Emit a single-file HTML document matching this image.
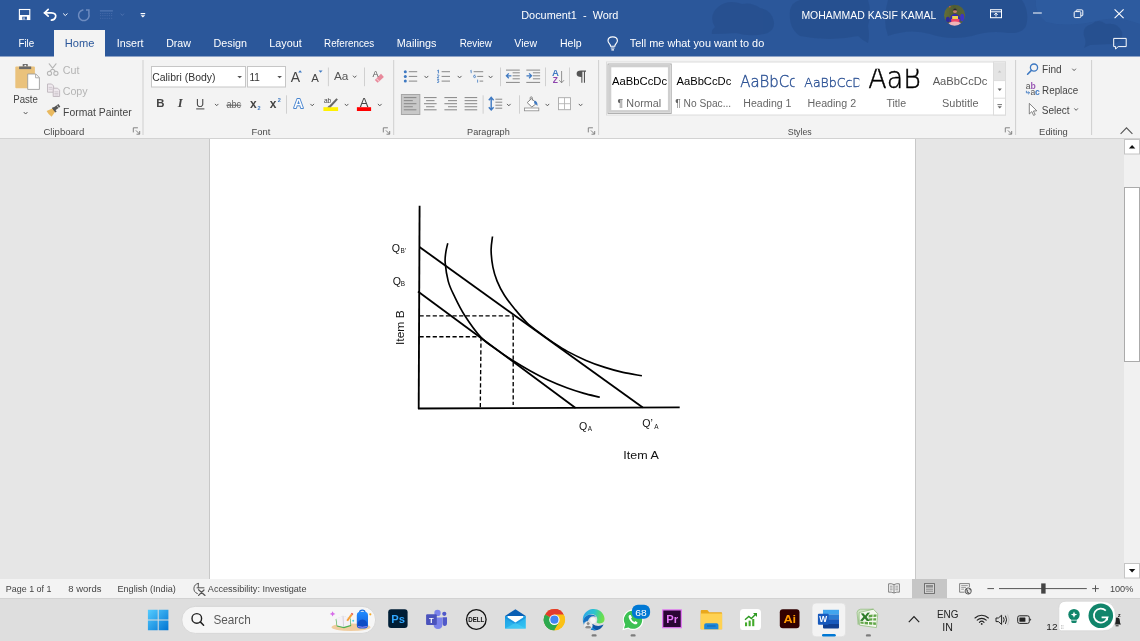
<!DOCTYPE html>
<html><head><meta charset="utf-8"><title>Document1 - Word</title>
<style>
*{box-sizing:border-box;margin:0;padding:0}
html,body{width:1140px;height:641px;overflow:hidden;background:#e6e6e6;font-family:"Liberation Sans",sans-serif}
#app{position:relative;width:1140px;height:641px;overflow:hidden}
.a{position:absolute}
.x{position:absolute;white-space:nowrap;line-height:1;transform-origin:0 0;display:block}
#title{left:0;top:0;width:1140px;height:56px;background:#2b579a}
#hometab{left:54px;top:30px;width:51px;height:27px;background:#f3f3f3}
#ribbon{left:0;top:56px;width:1140px;height:83px;background:#f3f3f3;border-bottom:1px solid #d2d2d2;border-top:1px solid #8ea3c7}
#doc{left:0;top:139px;width:1140px;height:440px;background:#e6e6e6}
#sheet{left:209px;top:139px;width:707px;height:440px;background:#fff;border-left:1px solid #c8c8c8;border-right:1px solid #c8c8c8}
#vs{left:1124px;top:139px;width:16px;height:440px;background:#f1f1f1}
#status{left:0;top:579px;width:1140px;height:19px;background:#f3f3f3}
#task{left:0;top:598px;width:1140px;height:43px;background:#dedede;border-top:1px solid #d2d2d2}
#svg{left:0;top:0;will-change:transform;font-family:"Liberation Sans",sans-serif}
</style></head><body><div id="app">
<div class="a" id="title"></div>
<div class="a" id="ribbon"></div>
<div class="a" id="hometab"></div>
<div class="a" id="doc"></div>
<div class="a" id="sheet"></div>
<div class="a" id="vs"></div>
<div class="a" id="status"></div>
<div class="a" id="task"></div>
<svg id="svg" class="a" width="1140" height="641" viewBox="0 0 1140 641">
<!-- title bar background clouds -->
<g fill="#21467f" opacity="0.36">
<path d="M712 34 Q711 30 715 27 Q708 16 718 7 Q728 -1 742 4 Q752 2 760 8 Q772 10 774 22 Q775 32 764 34 Q750 37 736 33 Q724 34 712 34Z"/>
<path d="M790 10 Q792 2 800 0 L868 0 Q872 12 868 26 Q870 36 868 43 Q862 40 858 36 Q830 42 800 36 Q788 28 790 10Z"/>
<path d="M888 0 L1022 0 Q1030 12 1026 26 Q1022 34 1008 33 Q990 30 972 36 Q950 41 930 34 Q910 28 888 36 Q882 20 888 0Z"/>
<path d="M1084 36 Q1082 26 1092 24 Q1098 18 1106 24 Q1118 22 1122 32 Q1124 42 1112 44 L1090 45 L1084 48 Q1087 42 1084 36Z"/>
</g>
<g fill="#3466b0" opacity="0.25">
<path d="M1036 0 L1140 0 L1140 24 Q1120 16 1100 20 Q1070 28 1046 22 Q1034 12 1036 0Z"/>
</g>
<!-- save -->
<g fill="none" stroke="#fff" stroke-width="1.1">
<rect x="19.4" y="9.5" width="10.4" height="10"/>
</g>
<rect x="19.4" y="15" width="10.4" height="4.6" fill="#fff"/>
<rect x="22.3" y="16.7" width="4.6" height="3" fill="#2b579a"/>
<rect x="23.5" y="17.3" width="1" height="2.3" fill="#fff"/>
<!-- undo -->
<path d="M44.4 12.8 H51.3 C55 12.8 56.2 15 55.6 17 C55 19 53.2 20 51.4 20.2" fill="none" stroke="#fff" stroke-width="1.7" stroke-linecap="round"/>
<path d="M48.2 9.4 L44.6 12.8 L48.2 16.2" fill="none" stroke="#fff" stroke-width="1.7" stroke-linecap="round" stroke-linejoin="round"/>
<path d="M63.2 13.5 L65.3 15.6 L67.4 13.5" fill="none" stroke="#fff" stroke-width="1"/>
<!-- redo faded -->
<g stroke="#6e8cc0" fill="none" stroke-width="1.5" stroke-linecap="round">
<path d="M82.8 10.1 A5.3 5.3 0 1 0 88.9 13.8"/>
<path d="M86 9.9 H88.9 V13.4" stroke-linejoin="miter" stroke-linecap="butt"/>
</g>
<!-- table faded -->
<g fill="#4a71ae">
<rect x="99.9" y="10.1" width="13" height="1.5"/>
</g>
<g stroke="#456aa9" stroke-width="0.9" stroke-dasharray="1.2 1">
<path d="M100 13.5 H113 M100 15.6 H113 M100 18.3 H113"/>
</g>
<path d="M120.6 13.6 L122.3 15.5 L124 13.6" fill="none" stroke="#4f74b0" stroke-width="0.9"/>
<!-- customize -->
<rect x="140.6" y="13" width="4.6" height="1.2" fill="#fff"/>
<path d="M140.6 15.2 H145.2 L142.9 17.4Z" fill="#fff"/>
<!-- avatar -->
<defs><clipPath id="av"><circle cx="954.6" cy="15.2" r="10.5"/></clipPath>
<filter id="avb" x="-10%" y="-10%" width="120%" height="120%"><feGaussianBlur stdDeviation="0.55"/></filter>
<linearGradient id="avg" x1="0" y1="0" x2="1" y2="0"><stop offset="0" stop-color="#6a7437"/><stop offset="0.45" stop-color="#4f5c33"/><stop offset="1" stop-color="#5d6a3a"/></linearGradient></defs>
<g clip-path="url(#av)"><g filter="url(#avb)">
<rect x="942" y="2" width="26" height="27" fill="url(#avg)"/>
<circle cx="949.7" cy="6.6" r="0.9" fill="#d2603a"/>
<ellipse cx="947.8" cy="19.6" rx="2" ry="2.8" fill="#2e2a9c"/>
<ellipse cx="962.2" cy="17.6" rx="2" ry="3.8" fill="#3d35c4"/>
<path d="M949.6 22 Q949.4 14.4 955 13.8 Q960.6 14.4 960.4 22Z" fill="#3429ae"/>
<circle cx="955" cy="11.2" r="1.9" fill="#c08468"/>
<path d="M953 10.6 Q953.2 8.6 955 8.6 Q956.8 8.6 957 10.6 Q955 9.8 953 10.6Z" fill="#2a2030"/>
<rect x="952.2" y="16" width="5.8" height="3.2" fill="#f0d24e"/>
<rect x="951.2" y="19" width="8.2" height="3.2" fill="#ee4468"/>
<ellipse cx="954.8" cy="24" rx="6.4" ry="2.6" fill="#efb4b8"/>
</g></g>
<!-- ribbon display options -->
<g fill="none" stroke="#fff" stroke-width="1">
<rect x="990.5" y="9.7" width="11" height="8"/>
<path d="M990.5 11.8 H1001.5"/>
<path d="M996 16.6 V13.2 M994.3 14.8 L996 13.1 L997.7 14.8"/>
</g>
<!-- minimize -->
<path d="M1033 13 H1041.8" stroke="#fff" stroke-width="1"/>
<!-- restore -->
<g fill="none" stroke="#fff" stroke-width="1">
<rect x="1074.2" y="11.6" width="6.6" height="6" rx="1"/>
<path d="M1076.2 11.4 V10.6 Q1076.2 9.9 1077 9.9 H1081.8 Q1082.8 9.9 1082.8 10.8 V15 Q1082.8 15.8 1082 15.8 H1081"/>
</g>
<!-- close -->
<path d="M1114.6 9.4 L1123.6 18.2 M1123.6 9.4 L1114.6 18.2" stroke="#fff" stroke-width="1.1"/>
<!-- comments -->
<path d="M1113.7 38.4 H1126.2 V46.6 H1118.2 L1115.6 49 V46.6 H1113.7Z" fill="none" stroke="#fff" stroke-width="1"/>
<!-- lightbulb -->
<g fill="none" stroke="#fff" stroke-width="1.15">
<path d="M610.6 46.2 C610.6 44 608 43.4 608 40.8 C608 38.4 610 36.8 612.7 36.8 C615.4 36.8 617.4 38.4 617.4 40.8 C617.4 43.4 614.8 44 614.8 46.2 Z"/>
<path d="M610.8 48 H614.6 M611.4 49.8 H614"/>
</g>
<rect x="142.5" y="60" width="1" height="75" fill="#cfcfcf"/>
<rect x="393.2" y="60" width="1" height="75" fill="#cfcfcf"/>
<rect x="598.1" y="60" width="1" height="75" fill="#cfcfcf"/>
<rect x="1015.1" y="60" width="1" height="75" fill="#cfcfcf"/>
<rect x="1091.1" y="60" width="1" height="75" fill="#cfcfcf"/>
<g fill="none" stroke="#777" stroke-width="0.9"><path d="M133.3 132.4 V127.8 H137.9"/><path d="M135.9 130.4 L139.5 134.0 M139.70000000000002 131.0 V134.2 H136.5"/></g>
<g fill="none" stroke="#777" stroke-width="0.9"><path d="M383.3 132.4 V127.8 H387.90000000000003"/><path d="M385.90000000000003 130.4 L389.5 134.0 M389.7 131.0 V134.2 H386.5"/></g>
<g fill="none" stroke="#777" stroke-width="0.9"><path d="M588.3 132.4 V127.8 H592.9"/><path d="M590.9 130.4 L594.5 134.0 M594.6999999999999 131.0 V134.2 H591.5"/></g>
<g fill="none" stroke="#777" stroke-width="0.9"><path d="M1005.3 132.4 V127.8 H1009.9"/><path d="M1007.9 130.4 L1011.5 134.0 M1011.6999999999999 131.0 V134.2 H1008.5"/></g>
<rect x="15.3" y="66.5" width="19.6" height="21.7" rx="1" fill="#eac27c"/>
<rect x="19.1" y="66.5" width="12.1" height="2.6" fill="#6a6a6a"/>
<path d="M22.7 66.6 V64.6 Q22.7 64 23.3 64 H27.2 Q27.8 64 27.8 64.6 V66.6Z" fill="#6a6a6a"/>
<rect x="24.4" y="64.9" width="1.8" height="1.3" fill="#f3f3f3"/>
<path d="M27.7 74 H35.8 L39.4 77.6 V89.4 H27.7Z" fill="#fff" stroke="#999" stroke-width="0.85" stroke-linejoin="round"/>
<path d="M35.6 74.2 V77.8 H39.2" fill="none" stroke="#999" stroke-width="0.8"/>
<path d="M23.80 112.10 L25.60 114.04 L27.40 112.10" fill="none" stroke="#555" stroke-width="1.0"/>
<g fill="none" stroke="#b6b6b6" stroke-width="1.1" stroke-linecap="round"><path d="M49.2 63.8 L55.4 71.6 M56 63.8 L49.8 71.6"/><circle cx="49.5" cy="73.3" r="2.1"/><circle cx="55.9" cy="73.3" r="2.1"/></g>
<g fill="#efe9ee" stroke="#bdb5bc" stroke-width="0.9" stroke-linejoin="round"><path d="M47.5 84 H51.6 L53.6 86 V92.2 H47.5Z"/><path d="M53.2 88.2 H57.6 L59.6 90.2 V96.5 H53.2Z"/></g>
<g stroke="#c4bcc3" stroke-width="0.7"><path d="M48.6 87.4 H52.4 M48.6 89.2 H52.4 M54.4 91.8 H58.4 M54.4 93.4 H58.4 M54.4 95 H58.4"/></g>
<path d="M46.6 110.9 L52.9 108.2 L55.3 111.4 L51.6 116.7 Q48.6 114.6 46.6 110.9Z" fill="#e9b95f"/>
<path d="M53.4 109.6 L59.4 105.4" stroke="#555" stroke-width="3.2" stroke-linecap="butt"/>
<path d="M52.6 107.4 L56 112" stroke="#555" stroke-width="1.6"/>
<path d="M57 105.5 L58.6 107.8" stroke="#d8d8d8" stroke-width="0.9"/>
<rect x="151.5" y="66.5" width="94" height="20.5" fill="#fff" stroke="#c6c6c6" stroke-width="1"/>
<rect x="247.5" y="66.5" width="38" height="20.5" fill="#fff" stroke="#c6c6c6" stroke-width="1"/>
<path d="M237.3 75.9 H242.0 L239.7 78.2Z" fill="#555"/>
<path d="M277.3 75.9 H282.0 L279.6 78.2Z" fill="#555"/>
<path d="M298.2 72.6 L300.1 70.3 L302 72.6Z" fill="#3e79c2"/>
<path d="M318.6 70.4 H322.6 L320.6 72.7Z" fill="#3e79c2"/>
<rect x="327.9" y="67.5" width="1" height="18.700000000000003" fill="#d0d0d0"/>
<rect x="364.0" y="67.5" width="1" height="18.700000000000003" fill="#d0d0d0"/>
<path d="M353.00 75.70 L354.70 77.54 L356.40 75.70" fill="none" stroke="#5e5e5e" stroke-width="1.0"/>
<path d="M374.8 79.9 L381 73.8 L383.9 77 L377.7 82.8Z" fill="#e8899b"/>
<path d="M375.9 78.8 L376.7 78 L379.6 81 L378.8 81.8Z" fill="#f6c4cd"/>
<rect x="226.4" y="104.7" width="14.8" height="1" fill="#555"/>
<rect x="196.2" y="108.4" width="8.2" height="1" fill="#444"/>
<path d="M215.00 103.90 L216.70 105.74 L218.40 103.90" fill="none" stroke="#5e5e5e" stroke-width="1.0"/>
<rect x="286.0" y="95.3" width="1" height="18.400000000000006" fill="#d0d0d0"/>
<path d="M310.40 103.90 L312.20 105.84 L314.00 103.90" fill="none" stroke="#5e5e5e" stroke-width="1.0"/>
<rect x="323.4" y="107.2" width="14.7" height="3.8" fill="#fff100"/>
<path d="M329 106 L336.4 98.2 L337.9 99.6 L330.8 107.2Z" fill="#666"/>
<path d="M327.4 107.3 L329 105.6 L330.9 107.3Z" fill="#666"/>
<path d="M344.80 103.90 L346.60 105.84 L348.40 103.90" fill="none" stroke="#5e5e5e" stroke-width="1.0"/>
<rect x="356.9" y="107.2" width="14.2" height="3.8" fill="#f00"/>
<path d="M377.90 103.90 L379.75 105.90 L381.60 103.90" fill="none" stroke="#5e5e5e" stroke-width="1.0"/>
<circle cx="405.3" cy="71.7" r="1.5" fill="#3e79c2"/>
<rect x="408.8" y="71.2" width="8.4" height="1" fill="#888"/>
<circle cx="405.3" cy="76.4" r="1.5" fill="#3e79c2"/>
<rect x="408.8" y="75.9" width="8.4" height="1" fill="#888"/>
<circle cx="405.3" cy="81.1" r="1.5" fill="#3e79c2"/>
<rect x="408.8" y="80.6" width="8.4" height="1" fill="#888"/>
<path d="M424.50 75.90 L426.40 77.95 L428.30 75.90" fill="none" stroke="#5e5e5e" stroke-width="1.0"/>
<rect x="441.6" y="71.2" width="8.4" height="1" fill="#888"/>
<rect x="441.6" y="75.9" width="8.4" height="1" fill="#888"/>
<rect x="441.6" y="80.6" width="8.4" height="1" fill="#888"/>
<g fill="none" stroke="#3e79c2" stroke-width="0.9"><path d="M437.3 70.8 L438.4 70 V73.4 M437.2 75 Q438.6 74.4 438.8 75.4 Q438.8 76.2 437.2 77.8 H439 M437.2 79.4 H438.8 L437.8 80.8 Q439 80.9 438.9 81.9 Q438.6 82.8 437.1 82.4"/></g>
<path d="M457.70 75.90 L459.60 77.95 L461.50 75.90" fill="none" stroke="#5e5e5e" stroke-width="1.0"/>
<g fill="none" stroke="#3e79c2" stroke-width="0.8"><path d="M470.3 71 L471.2 70.3 V73.2"/><circle cx="474.6" cy="76.6" r="1"/><path d="M473.9 75.8 L474.8 74.6"/><path d="M477.6 79.6 V82.6"/></g>
<rect x="473.6" y="71.2" width="9.6" height="1" fill="#888"/><rect x="477.2" y="75.9" width="6" height="1" fill="#888"/><rect x="479.6" y="80.6" width="3.6" height="1" fill="#888"/>
<path d="M488.70 75.90 L490.60 77.95 L492.50 75.90" fill="none" stroke="#5e5e5e" stroke-width="1.0"/>
<rect x="500.0" y="67.5" width="1" height="18.700000000000003" fill="#d0d0d0"/>
<rect x="506" y="69.6" width="13.8" height="1" fill="#888"/><rect x="506" y="81.9" width="13.8" height="1" fill="#888"/>
<rect x="512.6" y="72.3" width="7.2" height="1" fill="#888"/>
<rect x="512.6" y="75.3" width="7.2" height="1" fill="#888"/>
<rect x="512.6" y="78.3" width="7.2" height="1" fill="#888"/>
<path d="M511.4 75.8 H506.6 M508.8 73.4 L506.4 75.8 L508.8 78.2" fill="none" stroke="#3e79c2" stroke-width="1.3"/>
<rect x="526.3" y="69.6" width="13.8" height="1" fill="#888"/><rect x="526.3" y="81.9" width="13.8" height="1" fill="#888"/>
<rect x="532.9" y="72.3" width="7.2" height="1" fill="#888"/>
<rect x="532.9" y="75.3" width="7.2" height="1" fill="#888"/>
<rect x="532.9" y="78.3" width="7.2" height="1" fill="#888"/>
<path d="M526.5 75.8 H531.3 M529.0999999999999 73.4 L531.5 75.8 L529.0999999999999 78.2" fill="none" stroke="#3e79c2" stroke-width="1.3"/>
<rect x="545.0" y="67.5" width="1" height="18.700000000000003" fill="#d0d0d0"/>
<path d="M561.6 71 V82.6 M559.2 80.2 L561.6 82.8 L564 80.2" fill="none" stroke="#777" stroke-width="0.8"/>
<rect x="569.0" y="67.5" width="1" height="18.700000000000003" fill="#d0d0d0"/>
<path d="M581 70.6 H586 V71.8 H585 V82.8 H583.9 V71.8 H582.4 V82.8 H581.3 V77 Q576.6 77 576.6 73.8 Q576.6 70.6 581 70.6Z" fill="#555"/>
<rect x="401.4" y="94.5" width="18.4" height="20" fill="#c8c8c8" stroke="#a6a6a6" stroke-width="1"/>
<rect x="403.8" y="97.10" width="12.6" height="1" fill="#868686"/>
<rect x="403.8" y="100.15" width="9" height="1" fill="#868686"/>
<rect x="403.8" y="103.20" width="12.6" height="1" fill="#868686"/>
<rect x="403.8" y="106.25" width="9" height="1" fill="#868686"/>
<rect x="403.8" y="109.30" width="12.6" height="1" fill="#868686"/>
<rect x="424.0" y="97.10" width="12.6" height="1" fill="#868686"/>
<rect x="426.1" y="100.15" width="8.4" height="1" fill="#868686"/>
<rect x="424.0" y="103.20" width="12.6" height="1" fill="#868686"/>
<rect x="426.1" y="106.25" width="8.4" height="1" fill="#868686"/>
<rect x="424.0" y="109.30" width="12.6" height="1" fill="#868686"/>
<rect x="444.4" y="97.10" width="12.6" height="1" fill="#868686"/>
<rect x="448.0" y="100.15" width="9" height="1" fill="#868686"/>
<rect x="444.4" y="103.20" width="12.6" height="1" fill="#868686"/>
<rect x="448.0" y="106.25" width="9" height="1" fill="#868686"/>
<rect x="444.4" y="109.30" width="12.6" height="1" fill="#868686"/>
<rect x="464.6" y="97.10" width="12.6" height="1" fill="#868686"/>
<rect x="464.6" y="100.15" width="12.6" height="1" fill="#868686"/>
<rect x="464.6" y="103.20" width="12.6" height="1" fill="#868686"/>
<rect x="464.6" y="106.25" width="12.6" height="1" fill="#868686"/>
<rect x="464.6" y="109.30" width="12.6" height="1" fill="#868686"/>
<rect x="482.6" y="95.3" width="1" height="18.400000000000006" fill="#d0d0d0"/>
<path d="M491.2 98 V109.4 M488.8 100.2 L491.2 97.4 L493.6 100.2 M488.8 107.2 L491.2 110 L493.6 107.2" fill="none" stroke="#3e79c2" stroke-width="1.4"/>
<rect x="495.4" y="98.7" width="6.8" height="1" fill="#888"/>
<rect x="495.4" y="101.7" width="6.8" height="1" fill="#888"/>
<rect x="495.4" y="104.7" width="6.8" height="1" fill="#888"/>
<rect x="495.4" y="107.7" width="6.8" height="1" fill="#888"/>
<path d="M507.00 103.90 L508.80 105.84 L510.60 103.90" fill="none" stroke="#5e5e5e" stroke-width="1.0"/>
<rect x="519.0" y="95.3" width="1" height="18.400000000000006" fill="#d0d0d0"/>
<rect x="524.4" y="108" width="14.4" height="2.8" fill="#fff" stroke="#8a8a8a" stroke-width="0.8"/>
<path d="M527.2 102.6 L531.6 98.6 L536.6 103.4 L531.8 107 Z" fill="#fff" stroke="#777" stroke-width="0.9" stroke-linejoin="round"/>
<path d="M530.2 100 V97.8 Q530.2 96.8 531.2 96.8 Q532.3 96.8 532.3 97.8 V100.6" fill="none" stroke="#777" stroke-width="0.8"/>
<path d="M534.6 100.4 Q538 101.4 537.4 106 Q536 103.6 534 103.2Z" fill="#3e79c2"/>
<path d="M545.60 103.90 L547.40 105.84 L549.20 103.90" fill="none" stroke="#5e5e5e" stroke-width="1.0"/>
<rect x="558.5" y="97.7" width="12" height="12" fill="#fff" stroke="#a8a8a8" stroke-width="0.9"/><path d="M564.5 97.7 V109.7 M558.5 103.7 H570.5" stroke="#b4b4b4" stroke-width="0.9"/>
<path d="M578.80 103.90 L580.60 105.84 L582.40 103.90" fill="none" stroke="#5e5e5e" stroke-width="1.0"/>
<rect x="606.5" y="62" width="399" height="53" fill="#fff" stroke="#dcdcdc" stroke-width="1"/>
<rect x="608" y="64" width="63.2" height="49.4" fill="#fff" stroke="#a8a8a8" stroke-width="1"/>
<rect x="610" y="66" width="59.2" height="45.4" fill="none" stroke="#cfcfcf" stroke-width="2.6"/>
<rect x="993.5" y="62" width="12" height="53" fill="#fff" stroke="#dcdcdc" stroke-width="1"/>
<rect x="994" y="62.5" width="11" height="18" fill="#e4e4e4"/>
<path d="M993.5 80.6 H1005.5 M993.5 98.2 H1005.5" stroke="#dcdcdc" stroke-width="1"/>
<path d="M997.8 72.6 L999.6 70.4 L1001.4 72.6Z" fill="#c2c2c2"/>
<path d="M997.6 88.6 H1001.8 L999.7 91Z" fill="#666"/>
<rect x="997.4" y="104.2" width="4.6" height="0.9" fill="#666"/><path d="M997.6 106.2 H1001.8 L999.7 108.6Z" fill="#666"/>
<circle cx="1034" cy="67.6" r="3.6" fill="none" stroke="#3e79c2" stroke-width="1.3"/><path d="M1031.4 70.4 L1027.6 74.2" stroke="#3e79c2" stroke-width="1.6" stroke-linecap="round"/>
<path d="M1072.30 68.70 L1074.10 70.64 L1075.90 68.70" fill="none" stroke="#5e5e5e" stroke-width="1.0"/>
<path d="M1074.30 108.40 L1076.10 110.34 L1077.90 108.40" fill="none" stroke="#5e5e5e" stroke-width="1.0"/>
<path d="M1026.4 90.8 V92.8 H1029.4 M1028.2 91.4 L1029.6 92.8 L1028.2 94.2" fill="none" stroke="#3e79c2" stroke-width="0.9"/>
<path d="M1029.3 103.4 V114 L1031.8 111.6 L1033.6 115.4 L1035.2 114.6 L1033.4 111 L1036.8 110.8Z" fill="#fff" stroke="#666" stroke-width="0.8" stroke-linejoin="round"/>
<path d="M1120.6 133.8 L1126.5 127.8 L1132.4 133.8" fill="none" stroke="#555" stroke-width="1.1"/>
<rect x="1124.5" y="139.5" width="15" height="14.5" fill="#fff" stroke="#c4c4c4" stroke-width="1"/>
<path d="M1128.9 148.4 L1132.1 145 L1135.3 148.4Z" fill="#111"/>
<rect x="1124.5" y="187.5" width="15" height="174" fill="#fff" stroke="#ababab" stroke-width="1"/>
<rect x="1124.5" y="563.5" width="15" height="14.5" fill="#fff" stroke="#c4c4c4" stroke-width="1"/>
<path d="M1128.9 569 H1135.3 L1132.1 572.4Z" fill="#111"/>
<g fill="none" stroke="#000" stroke-width="1.85" stroke-linecap="butt">
<path d="M419.6 205.8 L418.7 408.8"/>
<path d="M418 408.5 L679.7 407.3"/>
<path d="M419.5 247 L642.8 407.6"/>
<path d="M418 291.4 L575.6 407.9"/>
<path d="M447.8 243.2 C447.4 244.8 446.1 249.8 445.7 253.1 C445.3 256.4 444.8 258.2 445.2 262.9 C445.6 267.6 446.8 275.7 448.2 281.1 C449.6 286.5 451.2 289.6 453.9 295.2 C456.6 300.8 459.9 308.0 464.4 315.0 C468.9 322.0 475.6 331.6 481.0 337.4 C486.4 343.2 491.6 345.9 497.0 349.8 C502.4 353.7 507.7 357.3 513.2 360.8 C518.7 364.3 524.2 367.5 530.0 370.7 C535.8 373.9 541.8 377.1 548.0 380.0 C554.2 382.9 561.4 385.8 567.4 388.0 C573.4 390.2 578.6 391.8 584.0 393.4 C589.4 394.9 597.2 396.6 599.8 397.3" stroke-width="1.65"/>
<path d="M492.5 236.5 C492.3 238.8 491.0 245.2 491.1 250.3 C491.2 255.4 491.9 262.0 492.9 267.1 C493.9 272.2 495.2 276.4 497.1 281.1 C499.0 285.8 501.4 290.5 504.4 295.2 C507.4 299.9 511.1 304.6 514.9 309.2 C518.7 313.8 522.8 318.8 527.0 322.8 C531.2 326.8 535.7 329.9 540.0 333.2 C544.3 336.5 548.4 339.4 553.0 342.4 C557.6 345.4 561.9 348.4 567.4 351.4 C572.9 354.4 579.8 357.7 586.0 360.4 C592.2 363.1 598.7 365.4 604.9 367.4 C611.1 369.4 616.8 371.0 623.0 372.4 C629.2 373.8 638.8 375.2 641.9 375.8" stroke-width="1.65"/>
</g>
<g fill="none" stroke="#000" stroke-width="1.35" stroke-dasharray="4.2 2.4">
<path d="M419.5 315.9 H513.2"/>
<path d="M419.5 336.7 H481"/>
<path d="M481 337 L480.3 408"/>
<path d="M513.2 316 V405"/>
</g>
<!-- status bar icons -->
<g fill="none" stroke="#555" stroke-width="1" stroke-linecap="round">
<path d="M198.3 583.4 A5.3 5.3 0 0 0 197.4 593.6"/>
<path d="M198.3 583.4 V588"/>
<path d="M197 587.8 H204"/>
<path d="M198.6 589.8 L205 595.4 M204 590 L198.6 595.4" stroke-width="1.3"/>
</g>
<!-- read mode -->
<g fill="none" stroke="#777" stroke-width="0.9">
<path d="M894 584.6 Q891 583.2 888.6 583.8 V592.2 Q891 591.6 894 593 Q897 591.6 899.4 592.2 V583.8 Q897 583.2 894 584.6Z"/>
<path d="M894 584.6 V593"/>
<path d="M890 586.2 H892.6 M890 588 H892.6 M890 589.8 H892.6 M895.4 586.2 H898 M895.4 588 H898 M895.4 589.8 H898" stroke-width="0.7"/>
</g>
<!-- print layout selected -->
<rect x="912" y="579" width="35" height="19" fill="#c6c6c6"/>
<rect x="924.5" y="583.6" width="10" height="9.8" fill="#d6d6d6" stroke="#666" stroke-width="0.9"/>
<rect x="926" y="585" width="7" height="2.6" fill="#8c8c8c"/>
<path d="M926 589.2 H933 M926 591.2 H933" stroke="#777" stroke-width="0.8"/>
<!-- web layout -->
<g fill="none" stroke="#777" stroke-width="0.9">
<path d="M964.6 592.2 H959.6 V583.6 H969.4 V587.2"/>
<path d="M961.2 585.6 H967.8 M961.2 587.4 H966 M961.2 589.2 H964" stroke-width="0.7"/>
</g>
<circle cx="968.2" cy="591" r="3.5" fill="#f3f3f3"/><circle cx="968.2" cy="591" r="3.1" fill="#e0e0e0" stroke="#555" stroke-width="0.9"/>
<path d="M966.2 589.2 Q968 590.4 967.2 592 Q968.8 592.6 969.4 594 M969.4 588.2 Q969.8 589.6 971.2 590" fill="none" stroke="#555" stroke-width="1.1"/>
<!-- zoom slider -->
<path d="M987.4 588.6 H994" stroke="#555" stroke-width="1"/>
<path d="M999 588.6 H1086.8" stroke="#555" stroke-width="1"/>
<rect x="1041.2" y="583.4" width="4.4" height="10.2" fill="#444"/>
<path d="M1092.2 588.6 H1098.8 M1095.5 585.3 V591.9" stroke="#555" stroke-width="1"/>
<!-- taskbar -->
<defs>
<linearGradient id="wg" x1="0" y1="0" x2="1" y2="1"><stop offset="0" stop-color="#55ccff"/><stop offset="1" stop-color="#0074d2"/></linearGradient>
<linearGradient id="bp" x1="0" y1="0" x2="0" y2="1"><stop offset="0" stop-color="#1f8bff"/><stop offset="1" stop-color="#1257d6"/></linearGradient>
<linearGradient id="eg" x1="0" y1="0.3" x2="1" y2="0.5"><stop offset="0" stop-color="#2ea8ea"/><stop offset="0.5" stop-color="#2cc3cf"/><stop offset="0.85" stop-color="#5fdc5c"/><stop offset="1" stop-color="#72e04a"/></linearGradient>
<linearGradient id="mg" x1="0" y1="0" x2="1" y2="1"><stop offset="0" stop-color="#1b9de2"/><stop offset="1" stop-color="#35c6f4"/></linearGradient>
</defs>
<path d="M147.9 609.7 H157.7 V619.5 H147.9Z M158.7 609.7 H168.4 V619.5 H158.7Z M147.9 620.5 H157.7 V630.3 H147.9Z M158.7 620.5 H168.4 V630.3 H158.7Z" fill="url(#wg)"/>
<rect x="181.8" y="606.4" width="193.8" height="27" rx="13.5" fill="#f6f6f6" stroke="#d2d2d2" stroke-width="0.8"/>
<circle cx="196.8" cy="618.4" r="4.8" fill="none" stroke="#222" stroke-width="1.4"/>
<path d="M200.3 621.9 L203.6 625.2" stroke="#222" stroke-width="1.5" stroke-linecap="round"/>
<!-- search art -->
<ellipse cx="351" cy="627.2" rx="19.5" ry="3.8" fill="#f0cda0"/>
<path d="M335.6 619.2 L343 616 L350.6 618.6 L351.2 626 L344 628.2 L336.8 626.6Z" fill="#4caf50"/>
<path d="M336.2 618.4 L343 615.6 L350 618 L350.4 625 L343.6 627 L337.2 625.4Z" fill="#f4f1f6"/>
<path d="M343 615.8 L343.6 627" stroke="#c9c3d0" stroke-width="0.7"/>
<path d="M346.4 620.2 L351 613.8 L352.6 615 L348 621.2Z" fill="#f6a13a"/>
<path d="M351 613.8 L351.8 612.8 L353.4 614 L352.6 615Z" fill="#e8453c"/>
<path d="M332.6 611.2 L333.5 613 L335.4 613.9 L333.5 614.8 L332.6 616.6 L331.7 614.8 L329.8 613.9 L331.7 613Z" fill="#d66be8"/>
<circle cx="353.2" cy="620.8" r="1" fill="#4dd0e1"/>
<circle cx="370.3" cy="614.3" r="1.1" fill="#f6a821"/>
<path d="M359.6 612.4 Q359.6 610.2 362.3 610.2 Q365 610.2 365 612.4" fill="none" stroke="#1b6fe0" stroke-width="1.2"/>
<rect x="356.8" y="611.8" width="11.2" height="16.8" rx="3.6" fill="url(#bp)"/>
<path d="M357.6 626 Q357.4 619.6 362.4 619.6 Q367.4 619.6 367.2 626 Q362.4 627.6 357.6 626Z" fill="#0f4cc4"/>
<path d="M358 626.6 Q362.4 628 366.8 626.6" stroke="#b48cf0" stroke-width="0.9" fill="none"/>
<!-- Ps -->
<rect x="388.2" y="609.3" width="19.4" height="18.8" rx="3" fill="#001e36"/>
<!-- Teams -->
<circle cx="437.5" cy="612.9" r="3.2" fill="#7b83eb"/>
<path d="M433.6 617.4 H442.4 V624.6 Q442.4 629 438 629 Q433.6 629 433.6 624.6Z" fill="#7b83eb"/>
<circle cx="444.3" cy="613.8" r="2.1" fill="#5059c9"/>
<path d="M442.6 617.2 H447 V623 Q447 626 444.6 626 Q442.6 626 442.6 623Z" fill="#5059c9"/>
<rect x="426.1" y="614.2" width="10.7" height="10.8" rx="1" fill="#4b53bc"/>
<!-- Dell -->
<circle cx="476.3" cy="619.5" r="9.8" fill="none" stroke="#111" stroke-width="1.3"/>
<!-- Mail -->
<path d="M505 616 L515.4 609.3 L525.8 616Z" fill="#0a5fb4"/>
<path d="M505 616 H525.8 V628.6 H505Z" fill="url(#mg)"/>
<path d="M507.6 616 H523.2 L523.2 617.6 L515.4 622.6 L507.6 617.6Z" fill="#fff"/>
<path d="M505 616 L515.4 622.8 L525.8 616 V618 L515.4 624.6 L505 618Z" fill="#1583d8" opacity="0.55"/>
<path d="M515.4 622.8 L525.8 628.6 H505Z" fill="#4fd2f8" opacity="0.55"/>
<!-- Chrome -->
<g>
<circle cx="554.4" cy="619.7" r="10.6" fill="#fbc116"/>
<path d="M554.4 619.7 L545.2 614.4 A10.6 10.6 0 0 1 563.6 614.4Z" fill="#e33b2e"/>
<path d="M554.4 609.1 A10.6 10.6 0 0 1 563.6 614.4 H554.4Z" fill="#e33b2e"/>
<path d="M545.2 614.4 A10.6 10.6 0 0 0 554.4 630.3 L559 622.4 L554.4 619.7Z" fill="#2da94f"/>
<path d="M545.2 614.4 L549.8 622.4 L554.4 630.3 A10.6 10.6 0 0 1 545.2 614.4Z" fill="#2da94f"/>
<path d="M563.6 614.4 H554.4 L559 622.4 L554.4 630.3 A10.6 10.6 0 0 0 563.6 614.4Z" fill="#fbc116"/>
<circle cx="554.4" cy="619.7" r="5.2" fill="#fff"/>
<circle cx="554.4" cy="619.7" r="4.1" fill="#4285f4"/>
</g>
<!-- Edge -->
<path d="M582.9 621.4 A10.9 10.9 0 0 1 604.5 618.2 Q604.9 621.6 602 623 Q598.6 624.2 596.6 622.4 Q597.8 620.4 597 617.8 Q595 613.2 589.6 614.2 Q584.4 615.6 582.9 621.4Z" fill="url(#eg)"/>
<path d="M582.9 621.6 Q584 616 589.4 614.6 Q594 614 596.2 616.8 Q592.6 615.2 590 617.4 Q587 620.4 588.2 624.6 Q585.4 624.6 582.9 621.6Z" fill="#1572c4"/>
<path d="M582.9 621.6 Q583.4 625.4 586 628 L588.6 624.4 Q585.6 624 582.9 621.6Z" fill="#1a86d6"/>
<path d="M588.8 627.8 Q589.6 623.4 592.6 624 Q597.4 627.6 603.6 624.6 Q601 630.4 594.4 630.5 Q591 630.2 588.8 627.8Z" fill="#0f56a6"/>
<path d="M590 628.6 Q592.6 630.4 596 629.8 Q593.2 628.8 591.8 626.6Z" fill="#1d8fe0"/>
<path d="M590.4 618.6 Q592.6 616.6 595 618.2 Q596.6 620 595.6 622.6 Q593.4 624 591 623.4 Q589.6 621 590.4 618.6Z" fill="#f4f4f4"/>
<circle cx="588.1" cy="625.5" r="4.3" fill="#ececec" stroke="#d4d4d4" stroke-width="0.5"/>
<circle cx="588.1" cy="623.6" r="1.5" fill="#8c8c8c"/>
<path d="M585.2 627.9 Q585.2 625.7 588.1 625.7 Q591 625.7 591 627.9 Q588.1 629.2 585.2 627.9Z" fill="#8c8c8c"/>
<rect x="591.6" y="634.2" width="5" height="2.4" rx="1.2" fill="#7c7c7c"/>
<!-- WhatsApp -->
<path d="M633.2 609.6 A10.2 10.2 0 1 1 628.2 628.7 L622.4 630.2 L624 624.6 A10.2 10.2 0 0 1 633.2 609.6Z" fill="#fff"/>
<path d="M633.2 610.8 A9 9 0 1 1 628.4 627.4 L624 628.6 L625.2 624.4 A9 9 0 0 1 633.2 610.8Z" fill="#3cc153"/>
<path d="M629.6 615 Q628.4 615.4 628.6 617 Q629.4 621.2 633.6 623.8 Q636 625 637.2 623.4 L637.6 622.4 L635.4 621 L634.4 622 Q632 620.8 631 618.4 L632 617.4 L630.8 615Z" fill="#fff"/>
<rect x="631.9" y="604.7" width="18.2" height="14" rx="6" fill="#0078d4"/>
<rect x="630.6" y="634.2" width="5" height="2.4" rx="1.2" fill="#7c7c7c"/>
<!-- Pr -->
<rect x="662.7" y="609.9" width="18.6" height="17.8" fill="#2a0634" stroke="#e478f7" stroke-width="1.2"/>
<!-- Folder -->
<path d="M700.7 611 Q700.7 610 701.7 610 H707.4 L709.2 612.2 H721.2 Q722.1 612.2 722.1 613.2 V629.3 H700.7Z" fill="#e9a81c"/>
<path d="M700.7 613.6 H722.1 V628.4 Q722.1 629.3 721.2 629.3 H701.6 Q700.7 629.3 700.7 628.4Z" fill="#ffd252"/>
<path d="M704.2 629.3 V625 Q704.2 623.2 706 623.2 H716.6 Q718.4 623.2 718.4 625 V629.3Z" fill="#1e88d8"/>
<path d="M707 626 H715.6" stroke="#0f62ad" stroke-width="1"/>
<!-- Stocks -->
<rect x="740" y="609" width="21" height="21" rx="3.6" fill="#fff"/>
<g fill="#44ab2c"><rect x="745" y="622.4" width="2.1" height="3.8"/><rect x="748.6" y="620.6" width="2.1" height="5.6"/><rect x="752.2" y="619" width="2.1" height="7.2"/></g>
<path d="M745 619.8 L748.8 616.4 L751.4 618.6 L755.6 614.2" fill="none" stroke="#2e9a22" stroke-width="1.4"/>
<path d="M753 613 H757 V617Z" fill="#2e9a22"/>
<!-- Ai -->
<rect x="779.8" y="609.3" width="19.7" height="18.9" rx="3" fill="#310000"/>
<!-- Word -->
<rect x="812" y="603" width="33.6" height="33.8" rx="4" fill="#f3f3f3" stroke="#dedede" stroke-width="0.8"/>
<rect x="823" y="609.8" width="16" height="4.8" fill="#41a5ee"/>
<rect x="823" y="614.5" width="16" height="4.8" fill="#2b7cd3"/>
<rect x="823" y="619.2" width="16" height="4.8" fill="#185abd"/>
<path d="M823 624 H839 V627.6 Q839 628.6 838 628.6 H824 Q823 628.6 823 627.6Z" fill="#103f91"/>
<rect x="817.9" y="613.7" width="10.8" height="11" rx="1" fill="#185abd"/>
<rect x="822" y="633.9" width="13.8" height="2.7" rx="1.35" fill="#0078d4"/>
<!-- Excel old -->
<path d="M858.6 611.2 L873.4 609.2 L877.8 613.8 L876.4 627.6 L859.6 625.2 Z" fill="#f4f8ee" stroke="#9cc48a" stroke-width="0.9" stroke-linejoin="round"/>
<path d="M857 612.4 Q857.4 609.6 860.6 609.2 L873.4 609.2 L859.2 612.6 L858.2 624.6Z" fill="#cfe3c4" stroke="#8fbc7c" stroke-width="0.7"/>
<g fill="#5fa546"><path d="M868.8 615 L872.6 614.6 L872.4 617 L868.6 617.4Z"/><path d="M873.6 614.6 L876.6 614.4 L876.4 616.8 L873.4 617Z"/><path d="M868.6 618.4 L872.4 618.2 L872.2 620.6 L868.4 620.8Z"/><path d="M873.4 618.2 L876.2 618.2 L876 620.6 L873.2 620.6Z"/><path d="M860.4 621.6 L863.6 621.8 L863.6 624 L860.4 623.6Z"/><path d="M864.6 621.8 L868 622 L868 624.4 L864.6 624.2Z"/><path d="M869 622 L872.4 622.2 L872.2 624.8 L869 624.6Z"/><path d="M873.2 622.2 L876 622.4 L875.8 625 L873.2 624.8Z"/></g>
<path d="M860.8 613.6 L863.4 613.2 L865.2 615.6 L867.4 612.8 L870 612.6 L866.6 617 L869.6 621 L866.8 621 L864.8 618.4 L862.6 621 L860 620.8 L863.4 616.8Z" fill="#2f7d2a"/>
<rect x="865.9" y="634.2" width="5" height="2.4" rx="1.2" fill="#7c7c7c"/>
<!-- tray -->
<path d="M908.8 622.2 L914 616.6 L919.2 622.2" fill="none" stroke="#222" stroke-width="1.2"/>
<g fill="none" stroke="#222" stroke-width="1.1" stroke-linecap="round">
<path d="M975 618 A9.6 9.6 0 0 1 988.4 618"/>
<path d="M977.2 620.2 A6.4 6.4 0 0 1 986.2 620.2"/>
<path d="M979.4 622.3 A3.3 3.3 0 0 1 984 622.3"/>
</g>
<circle cx="981.7" cy="623.9" r="0.9" fill="#222"/>
<path d="M996 618 H998.4 L1001.6 615.2 V624.4 L998.4 621.6 H996Z" fill="none" stroke="#222" stroke-width="1" stroke-linejoin="round"/>
<path d="M1003.6 617.6 Q1005 619.8 1003.6 622" fill="none" stroke="#222" stroke-width="1" stroke-linecap="round"/>
<path d="M1005.6 616 Q1007.8 619.8 1005.6 623.6" fill="none" stroke="#222" stroke-width="1" stroke-linecap="round"/>
<path d="M1007.8 614.8 Q1010.6 619.8 1007.8 624.8" fill="none" stroke="#bbb" stroke-width="0.8" stroke-linecap="round"/>
<rect x="1017.7" y="615.8" width="11.6" height="7.6" rx="1.8" fill="none" stroke="#222" stroke-width="1"/>
<rect x="1019.4" y="617.4" width="6" height="4.4" rx="0.6" fill="#222"/>
<path d="M1030.2 618.4 Q1031.2 618.6 1031.2 619.6 Q1031.2 620.6 1030.2 620.8Z" fill="#222"/>
<!-- bell z -->
<path d="M1113 624.4 Q1114.2 623.2 1114.2 620.4 Q1114.2 617.6 1117 617.6 Q1119.8 617.6 1119.8 620.4 Q1119.8 623.2 1121 624.4Z" fill="#222"/>
<path d="M1115.6 625.8 H1118.6" stroke="#222" stroke-width="1"/>
<!-- grammarly -->
<path d="M1066 601.2 H1101 Q1115.6 601.2 1115.6 615.8 V618 Q1115.6 630.8 1102.8 630.8 H1061.4 Q1058.8 630.8 1058.8 628.2 V608.4 Q1058.8 601.2 1066 601.2Z" fill="#fff" stroke="#d6d6d6" stroke-width="0.8"/>
<circle cx="1100.8" cy="615.8" r="12.3" fill="#11856b"/>
<path d="M1105.8 610.6 A7 7 0 1 0 1107.6 617.4 H1101.6" fill="none" stroke="#fff" stroke-width="1.7"/>
<path d="M1105.2 619.4 L1107.8 617 L1108 620.6Z" fill="#fff"/>
<circle cx="1074" cy="614.6" r="5.7" fill="#11856b"/>
<path d="M1070.8 618.4 H1077.2 L1076.6 622 Q1076.4 622.9 1075.4 622.9 H1072.6 Q1071.6 622.9 1071.4 622Z" fill="#11856b"/>
<path d="M1070.8 620.2 H1077.2" stroke="#fff" stroke-width="0.7"/>
<path d="M1074 611.4 L1074.9 613.7 L1077.2 614.6 L1074.9 615.5 L1074 617.8 L1073.1 615.5 L1070.8 614.6 L1073.1 613.7Z" fill="#fff"/>
<g fill="#b0b0b0"><rect x="1061" y="625" width="0.8" height="0.8"/><rect x="1062.6" y="625" width="0.8" height="0.8"/><rect x="1061" y="626.6" width="0.8" height="0.8"/><rect x="1062.6" y="626.6" width="0.8" height="0.8"/><rect x="1061" y="628.2" width="0.8" height="0.8"/><rect x="1062.6" y="628.2" width="0.8" height="0.8"/></g>

<g id="txt">
<text x="521.27" y="19.40" font-size="10.6" fill="#fff" textLength="97.16" lengthAdjust="spacingAndGlyphs" >Document1  -  Word</text>
<text x="801.38" y="19.30" font-size="10.4" fill="#fff" textLength="134.94" lengthAdjust="spacingAndGlyphs" >MOHAMMAD KASIF KAMAL</text>
<text x="18.38" y="47.30" font-size="10.3" fill="#fff" textLength="15.83" lengthAdjust="spacingAndGlyphs" >File</text>
<text x="64.78" y="47.30" font-size="10.3" fill="#2b579a" textLength="29.63" lengthAdjust="spacingAndGlyphs" >Home</text>
<text x="116.69" y="47.30" font-size="10.3" fill="#fff" textLength="26.83" lengthAdjust="spacingAndGlyphs" >Insert</text>
<text x="166.19" y="47.30" font-size="10.3" fill="#fff" textLength="24.73" lengthAdjust="spacingAndGlyphs" >Draw</text>
<text x="213.49" y="47.30" font-size="10.3" fill="#fff" textLength="33.53" lengthAdjust="spacingAndGlyphs" >Design</text>
<text x="269.29" y="47.30" font-size="10.3" fill="#fff" textLength="32.43" lengthAdjust="spacingAndGlyphs" >Layout</text>
<text x="324.09" y="47.30" font-size="10.3" fill="#fff" textLength="50.13" lengthAdjust="spacingAndGlyphs" >References</text>
<text x="396.88" y="47.30" font-size="10.3" fill="#fff" textLength="39.63" lengthAdjust="spacingAndGlyphs" >Mailings</text>
<text x="459.69" y="47.30" font-size="10.3" fill="#fff" textLength="32.23" lengthAdjust="spacingAndGlyphs" >Review</text>
<text x="514.38" y="47.30" font-size="10.3" fill="#fff" textLength="22.63" lengthAdjust="spacingAndGlyphs" >View</text>
<text x="559.99" y="47.30" font-size="10.3" fill="#fff" textLength="21.73" lengthAdjust="spacingAndGlyphs" >Help</text>
<text x="629.88" y="47.00" font-size="10.3" fill="#fff" textLength="134.33" lengthAdjust="spacingAndGlyphs" >Tell me what you want to do</text>
<text x="13.30" y="103.20" font-size="10" fill="#444" textLength="24.60" lengthAdjust="spacingAndGlyphs" >Paste</text>
<text x="62.70" y="73.70" font-size="10" fill="#b4b4b4" textLength="16.70" lengthAdjust="spacingAndGlyphs" >Cut</text>
<text x="62.70" y="94.70" font-size="10" fill="#b4b4b4" textLength="25.00" lengthAdjust="spacingAndGlyphs" >Copy</text>
<text x="63.10" y="115.60" font-size="10" fill="#444" textLength="68.50" lengthAdjust="spacingAndGlyphs" >Format Painter</text>
<text x="43.42" y="134.70" font-size="9.5" fill="#4a4a4a" textLength="40.95" lengthAdjust="spacingAndGlyphs" >Clipboard</text>
<text x="251.62" y="134.70" font-size="9.5" fill="#4a4a4a" textLength="18.85" lengthAdjust="spacingAndGlyphs" >Font</text>
<text x="467.12" y="134.70" font-size="9.5" fill="#4a4a4a" textLength="42.65" lengthAdjust="spacingAndGlyphs" >Paragraph</text>
<text x="787.82" y="134.70" font-size="9.5" fill="#4a4a4a" textLength="23.95" lengthAdjust="spacingAndGlyphs" >Styles</text>
<text x="1039.12" y="134.70" font-size="9.5" fill="#4a4a4a" textLength="28.75" lengthAdjust="spacingAndGlyphs" >Editing</text>
<text x="152.20" y="80.90" font-size="10" fill="#333" textLength="63.30" lengthAdjust="spacingAndGlyphs" >Calibri (Body)</text>
<text x="254.75" y="80.90" font-size="10" fill="#333" text-anchor="middle" >11</text>
<text x="160.35" y="107.40" font-size="11.4" fill="#444" text-anchor="middle" font-weight="bold">B</text>
<text x="180.30" y="107.40" font-size="12.6" fill="#444" text-anchor="middle" font-style="italic" font-family='Liberation Serif,serif' font-weight="bold">I</text>
<text x="200.15" y="107.30" font-size="11.3" fill="#444" text-anchor="middle" >U</text>
<text x="226.49" y="107.60" font-size="10.2" fill="#666" textLength="14.62" lengthAdjust="spacingAndGlyphs" >abc</text>
<text x="253.25" y="107.60" font-size="12" fill="#444" text-anchor="middle" font-weight="bold">x</text>
<text x="258.95" y="110.20" font-size="5.5" fill="#3e79c2" text-anchor="middle" font-weight="bold">2</text>
<text x="273.15" y="107.60" font-size="12" fill="#444" text-anchor="middle" font-weight="bold">x</text>
<text x="279.30" y="102.20" font-size="5.5" fill="#3e79c2" text-anchor="middle" font-weight="bold">2</text>
<text x="295.45" y="81.60" font-size="14" fill="#444" text-anchor="middle" >A</text>
<text x="315.05" y="81.60" font-size="11.4" fill="#444" text-anchor="middle" >A</text>
<text x="341.15" y="80.00" font-size="11.8" fill="#555" text-anchor="middle" >Aa</text>
<text x="375.50" y="77.30" font-size="9.2" fill="#555" text-anchor="middle" >A</text>
<text x="327.55" y="102.90" font-size="6.6" fill="#444" text-anchor="middle" >ab</text>
<text x="298.40" y="108.30" font-size="13.2" fill="#fdfdfd" text-anchor="middle" font-weight="bold" stroke="#4a86d0" stroke-width="1.9" stroke-linejoin="round" paint-order="stroke">A</text>
<text x="364.00" y="107.40" font-size="13" fill="#444" text-anchor="middle" >A</text>
<text x="611.97" y="85.10" font-size="10.6" fill="#000" textLength="55.06" lengthAdjust="spacingAndGlyphs" >AaBbCcDc</text>
<text x="617.60" y="106.50" font-size="10" fill="#666" textLength="43.50" lengthAdjust="spacingAndGlyphs" >¶ Normal</text>
<text x="676.47" y="85.10" font-size="10.6" fill="#000" textLength="54.76" lengthAdjust="spacingAndGlyphs" >AaBbCcDc</text>
<text x="675.30" y="106.50" font-size="10" fill="#666" textLength="55.90" lengthAdjust="spacingAndGlyphs" >¶ No Spac...</text>
<clipPath id="c1"><rect x="739.10" y="68.56" width="55.60" height="24.32"/></clipPath><g clip-path="url(#c1)"><text x="740.34" y="86.80" font-size="15.2" fill="#2f5496" textLength="56.92" lengthAdjust="spacingAndGlyphs" stroke="#2f5496" stroke-width="0.4" stroke-linejoin="round" paint-order="stroke" font-family='DejaVu Sans Light,DejaVu Sans,sans-serif' font-weight="200">AaBbCc</text></g>
<text x="743.30" y="106.50" font-size="10" fill="#666" textLength="48.20" lengthAdjust="spacingAndGlyphs" >Heading 1</text>
<clipPath id="c2"><rect x="803.00" y="71.68" width="56.30" height="20.16"/></clipPath><g clip-path="url(#c2)"><text x="804.37" y="86.80" font-size="12.6" fill="#2f5496" textLength="57.66" lengthAdjust="spacingAndGlyphs" stroke="#2f5496" stroke-width="0.35" stroke-linejoin="round" paint-order="stroke" font-family='DejaVu Sans Light,DejaVu Sans,sans-serif' font-weight="200">AaBbCcD</text></g>
<text x="807.50" y="106.50" font-size="10" fill="#666" textLength="48.60" lengthAdjust="spacingAndGlyphs" >Heading 2</text>
<clipPath id="c3"><rect x="867.80" y="68.70" width="55.60" height="30.94"/></clipPath><g clip-path="url(#c3)"><text x="868.32" y="87.80" font-size="29.6" fill="#000" textLength="52.56" lengthAdjust="spacingAndGlyphs" stroke="#000" stroke-width="0.45" stroke-linejoin="round" paint-order="stroke" font-family='DejaVu Sans Light,DejaVu Sans,sans-serif' font-weight="200">AaB</text></g>
<text x="886.40" y="106.50" font-size="10" fill="#666" textLength="19.70" lengthAdjust="spacingAndGlyphs" >Title</text>
<text x="932.67" y="85.10" font-size="10.6" fill="#5a5a5a" textLength="54.76" lengthAdjust="spacingAndGlyphs" >AaBbCcDc</text>
<text x="942.10" y="106.50" font-size="10" fill="#666" textLength="36.40" lengthAdjust="spacingAndGlyphs" >Subtitle</text>
<text x="1042.10" y="73.30" font-size="10" fill="#444" textLength="19.60" lengthAdjust="spacingAndGlyphs" >Find</text>
<text x="1042.10" y="93.80" font-size="10" fill="#444" textLength="36.00" lengthAdjust="spacingAndGlyphs" >Replace</text>
<text x="1041.70" y="113.70" font-size="10" fill="#444" textLength="27.90" lengthAdjust="spacingAndGlyphs" >Select</text>
<text x="1028.10" y="88.50" font-size="8.6" fill="#555" text-anchor="middle" >a</text>
<text x="1033.05" y="88.50" font-size="8.6" fill="#9b59b6" text-anchor="middle" font-weight="bold">b</text>
<text x="1032.90" y="94.80" font-size="8.6" fill="#555" text-anchor="middle" >a</text>
<text x="1037.30" y="94.80" font-size="8.6" fill="#3e79c2" text-anchor="middle" font-weight="bold">c</text>
<text x="555.40" y="76.40" font-size="9.6" fill="#3e79c2" text-anchor="middle" font-weight="bold">A</text>
<text x="555.40" y="83.10" font-size="8.4" fill="#8e44ad" text-anchor="middle" font-weight="bold">Z</text>
<text x="5.74" y="592.40" font-size="9.2" fill="#444" textLength="45.82" lengthAdjust="spacingAndGlyphs" >Page 1 of 1</text>
<text x="68.34" y="592.40" font-size="9.2" fill="#444" textLength="33.12" lengthAdjust="spacingAndGlyphs" >8 words</text>
<text x="117.44" y="592.40" font-size="9.2" fill="#444" textLength="58.42" lengthAdjust="spacingAndGlyphs" >English (India)</text>
<text x="207.84" y="592.40" font-size="9.2" fill="#444" textLength="98.62" lengthAdjust="spacingAndGlyphs" >Accessibility: Investigate</text>
<text x="1109.94" y="592.40" font-size="9.2" fill="#444" textLength="23.42" lengthAdjust="spacingAndGlyphs" >100%</text>
<text x="213.40" y="624.30" font-size="12" fill="#5a5a5a" textLength="37.30" lengthAdjust="spacingAndGlyphs" >Search</text>
<text x="936.97" y="617.50" font-size="10.6" fill="#222" textLength="21.56" lengthAdjust="spacingAndGlyphs" >ENG</text>
<text x="947.65" y="630.80" font-size="10.6" fill="#222" text-anchor="middle" >IN</text>
<text x="1046.33" y="630.10" font-size="9.4" fill="#222" textLength="11.24" lengthAdjust="spacingAndGlyphs" >12</text>
<text x="391.23" y="622.60" font-size="11.4" fill="#31a8ff" textLength="13.74" lengthAdjust="spacingAndGlyphs" font-weight="bold">Ps</text>
<text x="666.23" y="622.60" font-size="11.4" fill="#e478f7" textLength="11.94" lengthAdjust="spacingAndGlyphs" font-weight="bold">Pr</text>
<text x="783.41" y="622.60" font-size="11.8" fill="#ff9a00" textLength="12.78" lengthAdjust="spacingAndGlyphs" font-weight="bold">Ai</text>
<text x="823.30" y="622.40" font-size="8.4" fill="#fff" text-anchor="middle" font-weight="bold">W</text>
<text x="431.40" y="622.60" font-size="7.6" fill="#fff" text-anchor="middle" font-weight="bold">T</text>
<text x="468.27" y="621.90" font-size="6.6" fill="#111" textLength="16.06" lengthAdjust="spacingAndGlyphs" font-weight="bold">DELL</text>
<text x="635.34" y="615.60" font-size="9.2" fill="#fff" textLength="11.42" lengthAdjust="spacingAndGlyphs" >68</text>
<text x="1119.30" y="617.00" font-size="6" fill="#222" text-anchor="middle" font-weight="bold">z</text>
<text x="395.90" y="252.00" font-size="10.6" fill="#111" text-anchor="middle" >Q</text>
<text x="403.30" y="253.00" font-size="6.4" fill="#111" text-anchor="middle" >B’</text>
<text x="396.85" y="285.20" font-size="10.6" fill="#111" text-anchor="middle" >Q</text>
<text x="403.00" y="286.20" font-size="6.4" fill="#111" text-anchor="middle" >B</text>
<text x="583.20" y="430.30" font-size="10.6" fill="#111" text-anchor="middle" >Q</text>
<text x="589.85" y="431.20" font-size="6.4" fill="#111" text-anchor="middle" >A</text>
<text x="647.45" y="427.40" font-size="10.6" fill="#111" text-anchor="middle" >Q’</text>
<text x="656.35" y="428.50" font-size="6.4" fill="#111" text-anchor="middle" >A</text>
<text x="623.37" y="459.00" font-size="10.6" fill="#111" textLength="35.46" lengthAdjust="spacingAndGlyphs" >Item A</text>
<text transform="translate(404.30 344.50) rotate(-90)" x="-0.53" y="0" font-size="10.6" fill="#111" textLength="34.66" lengthAdjust="spacingAndGlyphs" >Item B</text>
</g>
</svg>
</div></body></html>
